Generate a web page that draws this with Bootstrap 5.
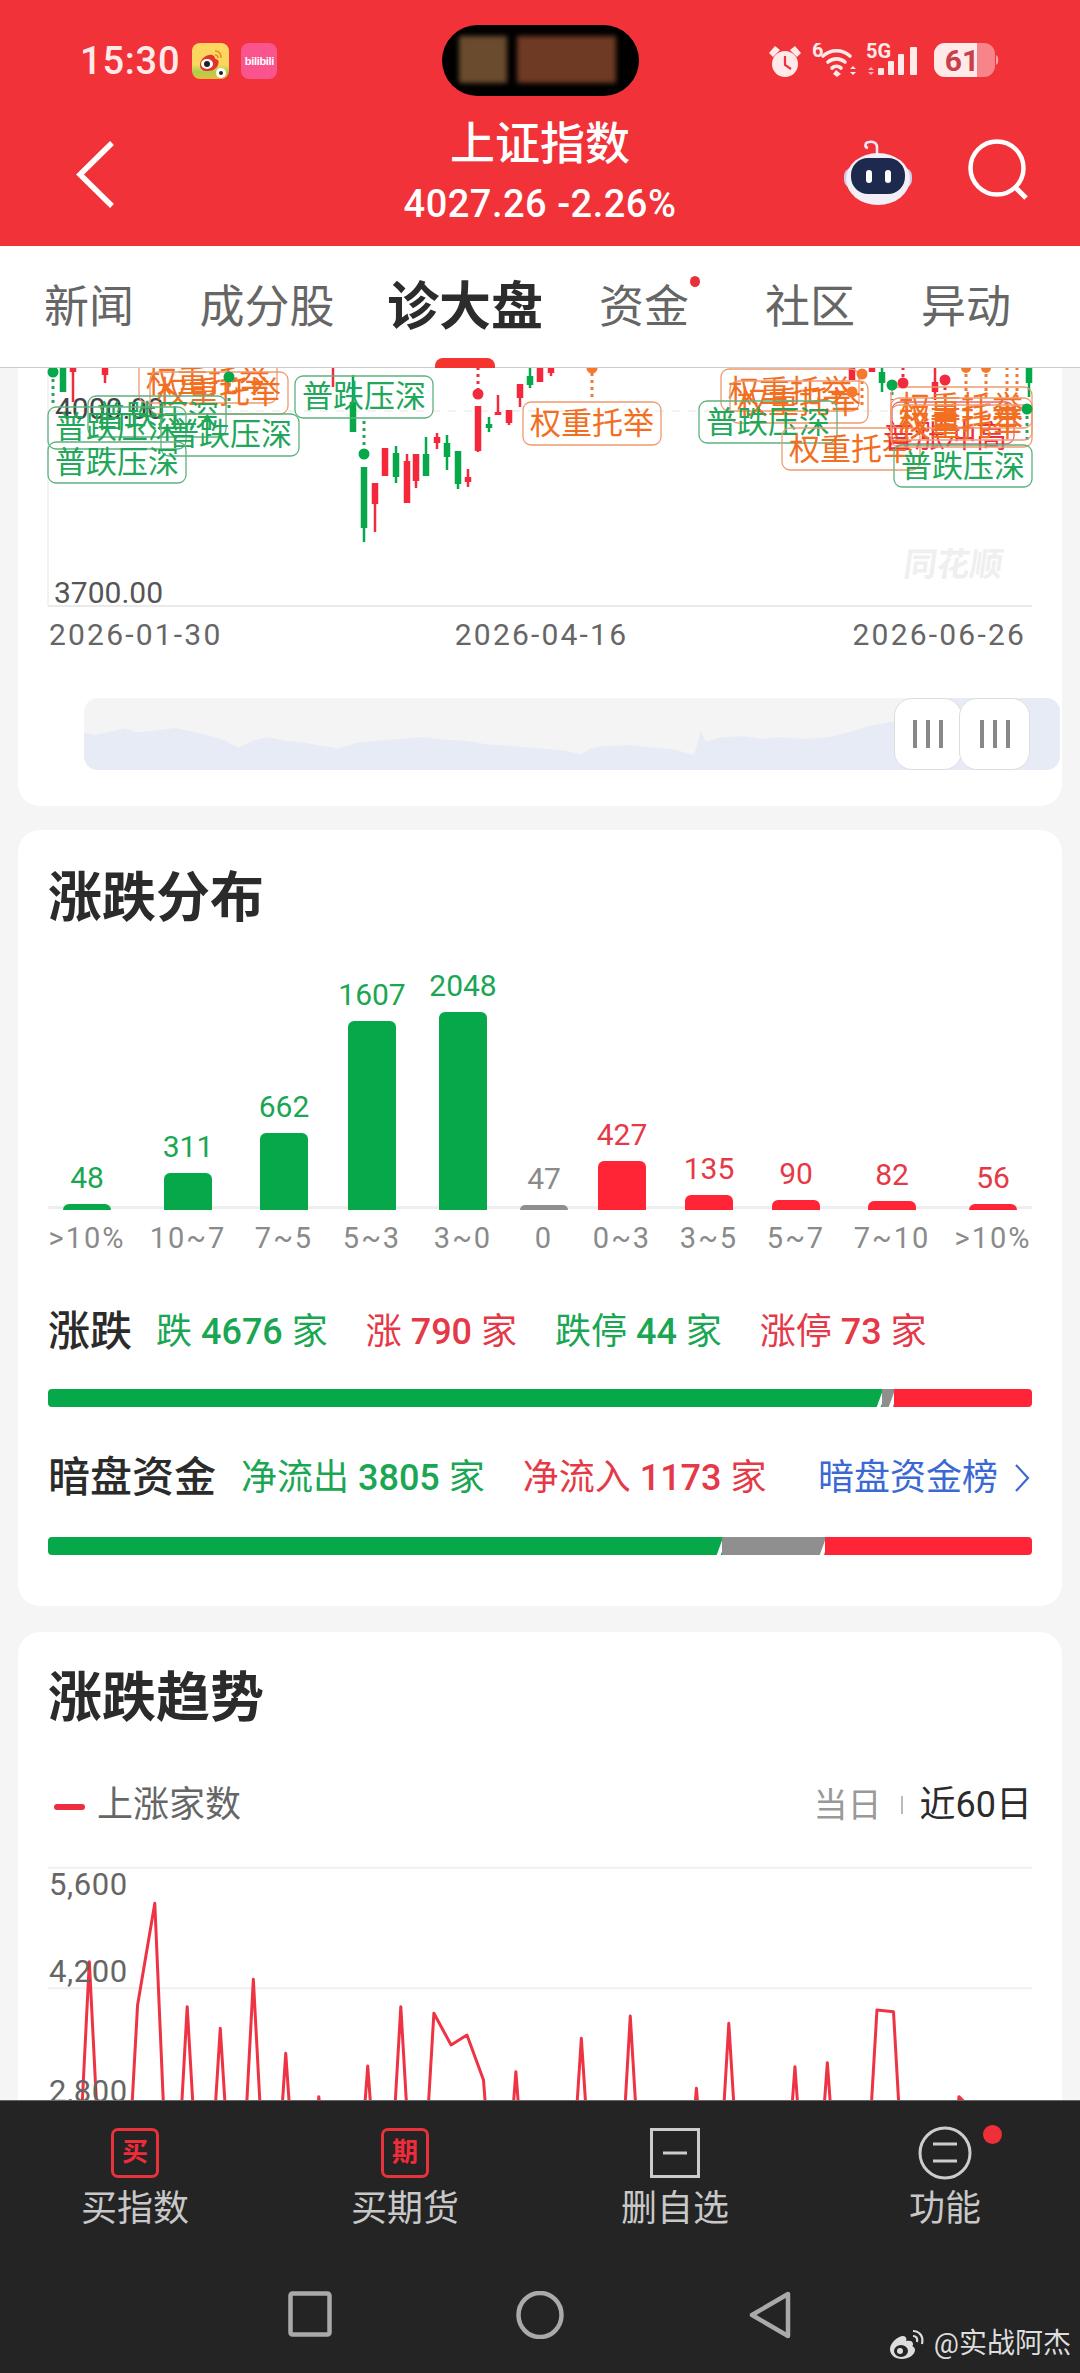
<!DOCTYPE html>
<html lang="zh">
<head>
<meta charset="utf-8">
<title>上证指数</title>
<link href="https://cdn.jsdelivr.net/npm/bootstrap@5.3.0/dist/css/bootstrap.min.css" rel="stylesheet">
<style>
html,body{margin:0;height:100%;background:#f5f5f5;}
body{font-family:Roboto,"Noto Sans CJK SC",sans-serif;color:#333;overflow:hidden;}
.app-shell{width:1080px;height:2373px;overflow:hidden;}
.red-head{background:#f13239;height:246px;padding-top:25px;color:#fff;flex:none;}
.status-row{display:grid;grid-template-columns:1fr 197px 1fr;height:71px;color:#ffe9e9;}
.status-left{padding-left:80px;gap:12px;}
.clock{font-size:38px;font-weight:500;line-height:1;letter-spacing:.8px;}
.app-weibo{width:37px;height:36px;border-radius:8px;background:linear-gradient(#fbd75f 60%,#a6d14e 80%,#f0b93a);display:block;}
.app-bili{width:36px;height:36px;border-radius:8px;background:#f9548e;color:#fff;font:700 11px/36px "Liberation Sans",sans-serif;text-align:center;display:block;letter-spacing:-.3px;}
.island{background:#000;border-radius:36px;padding:11px 0 0 17px;gap:10px;overflow:hidden;}
.blur-a,.blur-b{display:block;height:47px;filter:blur(2.5px);}
.blur-a{width:48px;background:#6b4b2e;}
.blur-b{width:99px;background:#6e3a24;}
.status-right{padding-right:81px;}
.title-row{display:grid;grid-template-columns:1fr auto 1fr;}
.back-wrap{padding:43px 0 0 74px;}
.icons-wrap{padding:41px 51px 0 0;gap:53px;}
.head-title{font-size:45px;font-weight:500;line-height:56px;margin-top:21px;}
.head-sub{font-size:38px;font-weight:500;line-height:44px;margin-top:9px;letter-spacing:.5px;}
.tabs-bar{height:122px;background:#fff;border-bottom:1px solid #ccc;display:grid;grid-template-columns:178px 178px 218px 140px 192px 120px;flex:none;}
.tab-item{font-size:45px;color:#666;text-align:center;line-height:124px;position:relative;}
.tab-on{font-size:52px;font-weight:700;color:#2c2c2c;}
.tab-on::after{content:"";position:absolute;left:79px;bottom:0;width:60px;height:12px;background:#f5332f;border-radius:8px 8px 0 0;}
.tab-dot{position:absolute;left:116px;top:30px;width:10px;height:11px;border-radius:50%;background:#e8303a;}
.scroller{flex:1 1 auto;min-height:0;overflow:hidden;padding:0 18px;background:#f5f5f5;}
.panel{background:#fff;border:0;border-radius:22px;margin-bottom:26px;}
.panel-top{border-radius:0 0 22px 22px;height:438px;margin-bottom:24px;}
.kchart{display:block;width:1044px;height:239px;}
.kchart text{font-family:"Noto Sans CJK SC",sans-serif;font-size:31px;text-anchor:middle;}
.kchart text.tg{fill:#22a75a;}
.kchart text.to{fill:#f26f22;}
.kchart text.tr{fill:#ea3041;}
.kchart text.axis{font-family:Roboto,sans-serif;font-size:30px;text-anchor:start;fill:#555;}
.rg{fill:none;stroke:#5db27f;stroke-width:1.3;}
.ro{fill:none;stroke:#ee9a70;stroke-width:1.3;}
.rr{fill:none;stroke:#e8606c;stroke-width:1.3;}
.w-g{stroke:#07a84a;stroke-width:2.5;fill:none;}
.b-g{stroke:#07a84a;stroke-width:6.5;fill:none;}
.w-r{stroke:#ef2b3d;stroke-width:2.5;fill:none;}
.b-r{stroke:#f5283b;stroke-width:6.5;fill:none;}
.dot-g,.dot-r,.dot-o{fill:none;stroke-width:3;stroke-dasharray:3 4;}
.dot-g{stroke:#2aa45c;}.dot-r{stroke:#ef2b3d;}.dot-o{stroke:#ef7a33;}
.dates{font-size:30px;line-height:36px;color:#666;padding:10px 6px 0 1px;letter-spacing:2.2px;}
.date-mid{margin-left:8px;}
.dates-wrap{padding:0 30px;}
.range-box{margin:45px 2px 0 66px;height:72px;background:#f4f4f4;border-radius:14px;position:relative;overflow:hidden;}
.range-box svg{display:block;width:100%;height:100%;}
.grip{position:absolute;top:0;height:72px;background:#fff;border:1.5px solid #ddd;border-radius:18px;gap:9px;}
.grip i{display:block;width:4px;height:28px;background:#888;}
.grip-a{left:810px;width:68px;}
.grip-b{left:875px;width:71px;}
.panel-title{font-size:54px;font-weight:700;line-height:65px;color:#2b2b2b;}
.panel-body{padding:36px 30px 51px;}
.dist-grid{display:grid;grid-template-columns:78px 124px 68px 108px 74px 88px 68px 106px 68px 124px 78px;}
.dist-bars{height:240px;margin-top:39px;background:linear-gradient(#eee,#eee) left bottom 1px/100% 3px no-repeat;align-items:end;}
.dist-col{display:flex;flex-direction:column;align-items:center;justify-content:flex-end;}
.dist-val{font-size:30px;line-height:30px;margin-bottom:11px;}
.dist-bar{display:block;width:48px;border-radius:6px 6px 0 0;}
.dist-labels{margin-top:10px;font-size:29px;line-height:36px;color:#8a8a8a;text-align:center;white-space:nowrap;letter-spacing:2px;}
.c-g{color:#1aa653;}.c-r{color:#e53947;}.c-n{color:#8a8a8a;}
.f-g{background:#07a84a;}.f-r{background:#ff2436;}.f-n{background:#8f8f8f;}
.stat-row{line-height:48px;font-size:36px;white-space:nowrap;gap:38px;}
.stat-row b{font-weight:500;}
.stat-head{font-size:42px;color:#2b2b2b;font-weight:500;margin-right:-14px;}
.stat-head2{margin-right:-13px;}
.stat-link{color:#3b69d4;margin-left:auto;padding-right:3px;margin-right:-1px;}
.split-bar{height:18px;margin-top:33px;background:#fff;border-radius:4px;}
.split-two{margin-top:35px;}
.split-bar .progress-bar{position:relative;overflow:visible;}
.split-bar .progress-bar:not(:last-child)::after{content:"";position:absolute;right:-2px;top:0;bottom:0;width:4px;background:#fff;transform:skewX(-20deg);}
.legend-row{margin-top:52px;line-height:44px;font-size:36px;color:#666;}
.legend-dash{display:inline-block;width:31px;height:6px;border-radius:3px;background:#ee2e40;margin:0 12px 0 6px;vertical-align:middle;}
.seg-off{color:#999;font-size:34px;}
.seg-sep{display:inline-block;width:2px;height:18px;background:#bbb;margin:0 17px 0 19px;}
.seg-on{color:#2b2b2b;}
.trend-wrap{position:relative;height:300px;margin-top:13px;}
.trend-wrap svg{display:block;width:984px;height:300px;}
.trend-lab{position:absolute;left:1px;font-size:31px;line-height:30px;color:#666;letter-spacing:.6px;}
.foot{background:#242424;height:273px;flex:none;padding-top:26px;position:relative;border-top:1px solid #666;}
.foot-col{display:flex;flex-direction:column;align-items:center;position:relative;}
.foot-icon{height:52px;display:flex;align-items:center;justify-content:center;}
.ficon{width:48px;height:50px;border:3px solid #e8323c;border-radius:7px;color:#f02c3c;font-size:26px;font-weight:700;line-height:42px;text-align:center;display:block;}
.foot-label{font-size:36px;line-height:42px;color:#c8c8c8;margin-top:9px;}
.foot-dot{position:absolute;left:173px;top:-2px;width:19px;height:19px;border-radius:50%;background:#ee2f38;}
.nav-row{display:grid;grid-template-columns:repeat(3,230px);justify-content:center;justify-items:center;margin-top:61px;}
.water{position:absolute;right:9px;bottom:11px;font-size:28px;line-height:36px;color:#ddd;gap:8px;white-space:nowrap;}
</style>
</head>
<body>
<div class="app-shell d-flex flex-column">

  <header class="red-head">
    <div class="status-row">
      <div class="status-left d-flex align-items-center">
        <span class="clock">15:30</span>
        <span class="app-weibo">
          <svg width="37" height="36" viewBox="0 0 37 36"><path d="M8 22c0-6 7-11 12-10 4 1 2 4 4 4 3 1 3 3 2 6-2 5-7 6-11 6-4 0-7-2-7-6z" fill="#e6322e"/><ellipse cx="15" cy="21" rx="6" ry="5" fill="#fff"/><circle cx="15" cy="21" r="3" fill="#222"/><path d="M23 8c4 0 6 3 6 7M23 12c2 0 3 1 3 3" stroke="#e98a2b" stroke-width="1.5" fill="none"/><circle cx="29" cy="30" r="5" fill="#fff"/><circle cx="29" cy="30" r="2" fill="#222"/></svg>
        </span>
        <span class="app-bili">bilibili</span>
      </div>
      <div class="island d-flex"><span class="blur-a"></span><span class="blur-b"></span></div>
      <div class="status-right d-flex align-items-center justify-content-end">
        <svg width="231" height="36" viewBox="768 44 231 36">
          <g fill="#ffe9e9">
            <circle cx="785" cy="65" r="13"/><path d="M769 54l6-7 5 4-7 7zM801 54l-6-7-5 4 7 7z"/>
            <path d="M785 57v9l6 4" stroke="#f13239" stroke-width="2.2" fill="none"/>
            <text x="812" y="58" font-family="Roboto" font-size="20" font-weight="700">6</text>
            <path d="M823 57a20 20 0 0 1 27 0M828 63a13 13 0 0 1 17 0M832 69a7 7 0 0 1 9 0" stroke="#ffe9e9" stroke-width="3.6" fill="none" stroke-linecap="round"/>
            <path d="M836 71l5 4-4 3-4-3zM853 67l3 3h-6zM853 76l3-3h-6z"/>
            <text x="866" y="59" font-family="Roboto" font-size="20" font-weight="700">5G</text>
            <rect x="878" y="69" width="6" height="7" rx="1"/><rect x="888" y="62" width="6" height="14" rx="1"/><rect x="898" y="55" width="6" height="21" rx="1"/><rect x="910" y="48" width="7" height="28" rx="1"/>
            <path d="M871 68l3 3h-6zM871 76l3-3h-6z" opacity=".7"/>
            <rect x="934" y="44" width="61" height="34" rx="11" opacity=".45"/>
            <path d="M945 44h32v34h-32a11 11 0 0 1-11-11v-12a11 11 0 0 1 11-11z"/>
            <path d="M996 56c3 1 3 9 0 10z" opacity=".6"/>
            <text x="962" y="72" font-family="Roboto" font-size="30" font-weight="700" text-anchor="middle" fill="#c8404a">61</text>
          </g>
        </svg>
      </div>
    </div>
    <div class="title-row">
      <div class="back-wrap">
        <svg width="44" height="72" viewBox="74 136 44 72"><path d="M112 140L80 171.5L112 203" stroke="#fff" stroke-width="5.5" fill="none"/></svg>
      </div>
      <div class="text-center">
        <div class="head-title">上证指数</div>
        <div class="head-sub">4027.26 -2.26%</div>
      </div>
      <div class="icons-wrap d-flex justify-content-end">
        <svg width="72" height="68" viewBox="840 137 72 68">
          <path d="M866 148c-4-1-3-6 1-6 4-1 8 1 8 5v7" stroke="#f3e9f5" stroke-width="2.6" fill="none"/>
          <rect x="842" y="168" width="68" height="20" rx="8" fill="#cfc8ec"/>
          <ellipse cx="876" cy="179" rx="32" ry="26" fill="#f2eff9"/>
          <rect x="849" y="158" width="54" height="36" rx="17" fill="#1d2a4d"/>
          <rect x="864" y="170" width="6" height="13" rx="3" fill="#fff"/>
          <rect x="883" y="170" width="6" height="13" rx="3" fill="#fff"/>
        </svg>
        <svg width="62" height="64" viewBox="964 142 62 64"><circle cx="994" cy="173" r="26.5" fill="none" stroke="#fff" stroke-width="4.5"/><path d="M1012 192L1023 203" stroke="#fff" stroke-width="5"/></svg>
      </div>
    </div>
  </header>

  <nav class="tabs-bar">
    <div class="tab-item">新闻</div>
    <div class="tab-item">成分股</div>
    <div class="tab-item tab-on">诊大盘</div>
    <div class="tab-item">资金<span class="tab-dot"></span></div>
    <div class="tab-item">社区</div>
    <div class="tab-item">异动</div>
  </nav>

  <main class="scroller">
    <section class="card panel panel-top">
      <svg class="kchart" viewBox="18 368 1044 239">
        <path d="M48 368V606" stroke="#eee" stroke-width="1.5"/>
        <path d="M48 411H1032" stroke="#eee" stroke-width="1.5" stroke-dasharray="8 8"/>
        <path d="M48 606H1032" stroke="#eaeaea" stroke-width="2"/>
        <g transform="translate(900 548) skewX(-8)"><text x="56" y="28" style="font-size:33px;font-weight:700;fill:#efefef">同花顺</text></g>
        <path class="dot-g" d="M53 372V405M229 377V410M364 421V445M1027 409V440M892 385V400"/>
        <path class="dot-r" d="M478 367V394M903 367V383M945 380V398"/>
        <path class="dot-o" d="M592 373V400M862 374V408M966 367V400M986 367V400M1007 367V400M1017 367V400"/>
        <path class="w-g" d="M364 467V542M396 446V483M426 437V476M447 435V470M458 451V489M489 417V432M530 367V388M353 375V432M882 367V392M1029 367V397"/>
        <path class="b-g" d="M63 367V392M364 467V528M396 453V477M426 454V476M447 443V457M458 451V484M489 424V428M530 376V385M353 402V432M882 372V383M1029 367V383"/>
        <path class="w-r" d="M73 367V402M105 367V383M333 367V387M375 483V532M407 454V503M416 454V488M437 433V449M468 469V487M478 406V452M498 395V415M509 410V425M520 384V407M551 367V376M935 367V400"/>
        <path class="b-r" d="M73 367V372M105 367V375M375 483V504M385 448V476M407 461V503M416 454V481M437 437V443M468 477V482M478 406V451M498 412V415M509 410V423M520 384V398M540 367V382M551 367V373M852 367V380M872 367V372M935 382V392"/>

        <text class="axis" x="55" y="419" style="fill:#444">4000.00</text>
        <text class="axis" x="54" y="603">3700.00</text>

        <rect class="ro" x="139" y="361" width="138" height="42" rx="8"/><text class="to" x="208" y="392">权重托举</text>
        <rect class="ro" x="150" y="372" width="138" height="42" rx="8"/><text class="to" x="219" y="403">权重托举</text>
        <rect class="rg" x="88" y="396" width="138" height="41" rx="8"/><text class="tg" x="157" y="427">普跌压深</text>
        <rect class="rg" x="48" y="407" width="138" height="42" rx="8"/><text class="tg" x="117" y="438">普跌压深</text>
        <rect class="rg" x="161" y="414" width="138" height="42" rx="8"/><text class="tg" x="230" y="445">普跌压深</text>
        <rect class="rg" x="48" y="442" width="138" height="41" rx="8"/><text class="tg" x="117" y="473">普跌压深</text>
        <rect class="rg" x="295" y="376" width="138" height="42" rx="8"/><text class="tg" x="364" y="407">普跌压深</text>
        <rect class="ro" x="523" y="402" width="138" height="43" rx="8"/><text class="to" x="592" y="434">权重托举</text>
        <rect class="ro" x="721" y="369" width="138" height="42" rx="8"/><text class="to" x="790" y="402">权重托举</text>
        <rect class="ro" x="730" y="381" width="138" height="42" rx="8"/><text class="to" x="799" y="413">权重托举</text>
        <rect class="rg" x="699" y="401" width="138" height="42" rx="8"/><text class="tg" x="768" y="433">普跌压深</text>
        <rect class="ro" x="782" y="428" width="138" height="42" rx="8"/><text class="to" x="851" y="460">权重托举</text>
        <rect class="rr" x="892" y="402" width="122" height="42" rx="8"/><text class="tr" x="945" y="447">普涨冲高</text>
        <rect class="ro" x="891" y="387" width="141" height="41" rx="8"/><text class="to" x="961" y="418">权重托举</text>
        <rect class="ro" x="891" y="398" width="141" height="42" rx="8"/><text class="to" x="961" y="429">权重托举</text>
        <rect class="ro" x="891" y="405" width="141" height="42" rx="8"/><text class="to" x="961" y="436">权重托举</text>
        <rect class="rg" x="894" y="445" width="138" height="42" rx="8"/><text class="tg" x="963" y="477">普跌压深</text>

        <g fill="#07a84a"><circle cx="53" cy="372" r="5.5"/><circle cx="229" cy="377" r="5.5"/><circle cx="364" cy="454" r="5.5"/><circle cx="892" cy="385" r="5.5"/><circle cx="1027" cy="409" r="5.5"/></g>
        <g fill="#ef2b3d"><circle cx="478" cy="394" r="5.5"/><circle cx="903" cy="383" r="5.5"/><circle cx="945" cy="380" r="5.5"/></g>
        <g fill="#f5782c"><circle cx="862" cy="374" r="5.5"/><circle cx="852" cy="392" r="5.5"/><circle cx="592" cy="368" r="5.5"/><circle cx="966" cy="368" r="5"/><circle cx="986" cy="368" r="5"/></g>
      </svg>
      <div class="dates-wrap"><div class="dates d-flex justify-content-between"><span>2026-01-30</span><span class="date-mid">2026-04-16</span><span>2026-06-26</span></div></div>
      <div class="range-box">
        <svg viewBox="122 1048 1373 214" preserveAspectRatio="none"><path fill="#e6ebf5" d="M122 1150L135 1158L150 1152L165 1145L180 1138L195 1150L210 1148L230 1142L250 1137L275 1148L300 1160L320 1175L340 1195L360 1175L380 1165L405 1175L430 1180L455 1190L480 1198L505 1182L530 1175L565 1170L600 1165L630 1172L660 1175L690 1186L720 1190L750 1196L780 1200L800 1205L820 1215L835 1198L850 1192L890 1188L920 1195L950 1200L968 1210L980 1218L990 1145L996 1178L1020 1165L1050 1162L1075 1170L1100 1165L1135 1170L1170 1165L1200 1148L1230 1130L1260 1118L1280 1110L1300 1120L1300 1048L1495 1048L1495 1262L122 1262Z"/></svg>
        <div class="grip grip-a d-flex align-items-center justify-content-center"><i></i><i></i><i></i></div>
        <div class="grip grip-b d-flex align-items-center justify-content-center"><i></i><i></i><i></i></div>
      </div>
    </section>

    <section class="card panel">
      <div class="panel-body">
        <h2 class="panel-title m-0">涨跌分布</h2>
        <div class="dist-grid dist-bars">
          <div class="dist-col"><span class="dist-val c-g">48</span><span class="dist-bar f-g" style="height:6px"></span></div>
          <div class="dist-col"><span class="dist-val c-g">311</span><span class="dist-bar f-g" style="height:37px"></span></div>
          <div class="dist-col"><span class="dist-val c-g">662</span><span class="dist-bar f-g" style="height:77px"></span></div>
          <div class="dist-col"><span class="dist-val c-g">1607</span><span class="dist-bar f-g" style="height:189px"></span></div>
          <div class="dist-col"><span class="dist-val c-g">2048</span><span class="dist-bar f-g" style="height:198px"></span></div>
          <div class="dist-col"><span class="dist-val c-n">47</span><span class="dist-bar f-n" style="height:5px"></span></div>
          <div class="dist-col"><span class="dist-val c-r">427</span><span class="dist-bar f-r" style="height:49px"></span></div>
          <div class="dist-col"><span class="dist-val c-r">135</span><span class="dist-bar f-r" style="height:15px"></span></div>
          <div class="dist-col"><span class="dist-val c-r">90</span><span class="dist-bar f-r" style="height:10px"></span></div>
          <div class="dist-col"><span class="dist-val c-r">82</span><span class="dist-bar f-r" style="height:9px"></span></div>
          <div class="dist-col"><span class="dist-val c-r">56</span><span class="dist-bar f-r" style="height:6px"></span></div>
        </div>
        <div class="dist-grid dist-labels">
          <span>&gt;10%</span><span>10~7</span><span>7~5</span><span>5~3</span><span>3~0</span><span>0</span><span>0~3</span><span>3~5</span><span>5~7</span><span>7~10</span><span>&gt;10%</span>
        </div>
        <div class="stat-row d-flex align-items-center" style="margin-top:52px">
          <span class="stat-head">涨跌</span>
          <span class="c-g">跌 <b>4676</b> 家</span>
          <span class="c-r">涨 <b>790</b> 家</span>
          <span class="c-g">跌停 <b>44</b> 家</span>
          <span class="c-r">涨停 <b>73</b> 家</span>
        </div>
        <div class="progress split-bar">
          <div class="progress-bar f-g" style="width:84.8%"></div>
          <div class="progress-bar f-n" style="width:1.2%"></div>
          <div class="progress-bar f-r" style="width:14%"></div>
        </div>
        <div class="stat-row d-flex align-items-center" style="margin-top:47px">
          <span class="stat-head stat-head2">暗盘资金</span>
          <span class="c-g">净流出 <b>3805</b> 家</span>
          <span class="c-r">净流入 <b>1173</b> 家</span>
          <span class="stat-link d-flex align-items-center">暗盘资金榜
            <svg class="ms-3" width="16" height="28" viewBox="0 0 16 28"><path d="M2 1L14 14L2 27" stroke="#3b69d4" stroke-width="2.2" fill="none"/></svg>
          </span>
        </div>
        <div class="progress split-bar split-two">
          <div class="progress-bar f-g" style="width:68.5%"></div>
          <div class="progress-bar f-n" style="width:10.5%"></div>
          <div class="progress-bar f-r" style="width:21%"></div>
        </div>
      </div>
    </section>

    <section class="card panel">
      <div class="panel-body" style="padding-top:34px">
        <h2 class="panel-title m-0">涨跌趋势</h2>
        <div class="legend-row d-flex justify-content-between align-items-center">
          <span><span class="legend-dash"></span>上涨家数</span>
          <span class="d-flex align-items-center"><span class="seg-off">当日</span><span class="seg-sep"></span><span class="seg-on">近60日</span></span>
        </div>
        <div class="trend-wrap">
          <svg viewBox="70 300 1428 900" preserveAspectRatio="none">
            <path d="M70 383H1498M70 745H1498M70 1107H1498" stroke="#f0f0f0" stroke-width="2" vector-effect="non-scaling-stroke"/>
            <polyline fill="none" stroke="#ee3344" stroke-width="3" stroke-linejoin="round" vector-effect="non-scaling-stroke" points="82,1650 106,1650 130,665 154,1650 177,1650 200,795 225,490 249,1650 272,800 296,1650 320,865 344,1650 368,718 392,1650 415,940 439,1650 463,1070 487,1650 510,1650 534,978 558,1650 582,800 606,1650 630,820 655,915 678,885 702,1020 725,1650 749,995 773,1650 797,1650 820,1650 844,895 868,1650 892,1650 915,828 939,1650 963,1650 987,1650 1011,1045 1035,1650 1058,850 1082,1650 1106,1650 1130,1650 1154,980 1177,1650 1201,968 1225,1650 1249,1650 1273,810 1297,815 1320,1650 1344,1650 1368,1650 1392,1070 1416,1120 1498,1120"/>
          </svg>
          <span class="trend-lab" style="top:30px">5,600</span>
          <span class="trend-lab" style="top:117px">4,200</span>
          <span class="trend-lab" style="top:237px">2,800</span>
        </div>
      </div>
    </section>
  </main>

  <footer class="foot">
    <div class="row g-0">
      <div class="col-3 foot-col"><div class="foot-icon"><span class="ficon">买</span></div><div class="foot-label">买指数</div></div>
      <div class="col-3 foot-col"><div class="foot-icon"><span class="ficon">期</span></div><div class="foot-label">买期货</div></div>
      <div class="col-3 foot-col"><div class="foot-icon"><svg width="50" height="50" viewBox="0 0 50 50"><rect x="1.5" y="1.5" width="47" height="47" fill="none" stroke="#ccc" stroke-width="3"/><path d="M13 25H37" stroke="#ccc" stroke-width="3"/></svg></div><div class="foot-label">删自选</div></div>
      <div class="col-3 foot-col"><div class="foot-icon"><svg width="54" height="54" viewBox="0 0 54 54"><circle cx="27" cy="27" r="25" fill="none" stroke="#ccc" stroke-width="3"/><path d="M15 18H39M15 35H39" stroke="#ccc" stroke-width="3"/></svg></div><div class="foot-label">功能</div><span class="foot-dot"></span></div>
    </div>
    <div class="nav-row">
      <svg width="44" height="46" viewBox="0 0 44 46"><rect x="2.5" y="2.5" width="39" height="41" rx="2" fill="none" stroke="#aaa" stroke-width="4.5"/></svg>
      <svg width="48" height="48" viewBox="0 0 48 48"><ellipse cx="24" cy="24" rx="21.5" ry="22" fill="none" stroke="#aaa" stroke-width="4.5"/></svg>
      <svg width="42" height="48" viewBox="0 0 42 48"><path d="M39 3V45L3 24Z" fill="none" stroke="#aaa" stroke-width="4.5" stroke-linejoin="round"/></svg>
    </div>
    <div class="water d-flex align-items-center">
      <svg width="38" height="32" viewBox="0 0 38 32"><path d="M2 21c0-6 8-13 13-13 3 0 4 3 3 5 4-1 7 0 7 3 0 1 0 2-1 2 2 1 3 2 3 4 0 5-7 9-13 9-7 0-12-4-12-10z" fill="#ddd"/><ellipse cx="13" cy="23" rx="7" ry="6" fill="#242424"/><circle cx="12" cy="23" r="3" fill="#ddd"/><path d="M25 3c6 0 11 5 9 13M25 8c3 0 5 2 4 6" stroke="#ddd" stroke-width="2.2" fill="none"/></svg>
      <span>@实战阿杰</span>
    </div>
  </footer>
</div>
<script src="https://cdn.jsdelivr.net/npm/bootstrap@5.3.0/dist/js/bootstrap.bundle.min.js"></script>
</body>
</html>
